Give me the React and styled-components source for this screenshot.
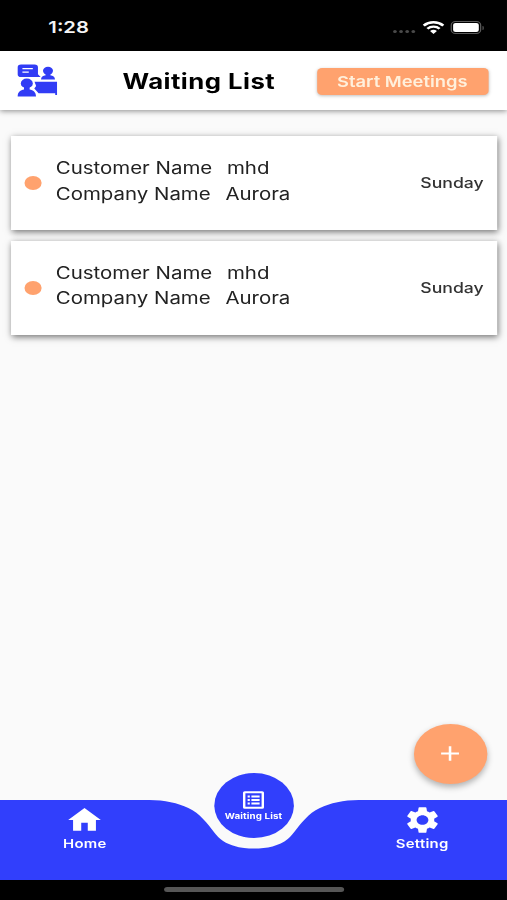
import styled, { createGlobalStyle } from 'styled-components';
import { MdHome, MdSettings, MdAdd } from 'react-icons/md';

const customers = [
  { id: 1, name: 'mhd', company: 'Aurora', day: 'Sunday' },
  { id: 2, name: 'mhd', company: 'Aurora', day: 'Sunday' },
];

const MeetingLogo = () => (
  <svg width="33" height="34" viewBox="0 0 33 34" fill="#313cf5">
    <path d="M3.200 .6h11a2.800 2.800 0 0 1 2.800 2.800v6.800l2.200 2.800H3.200A2.800 2.800 0 0 1 .4 10.200V3.400A2.800 2.800 0 0 1 3.200 .6z" />
    <path d="M4.300 4.700h8.500M4.300 8.200h5.200" stroke="#fff" strokeWidth="1.300" />
    <circle cx="25.200" cy="6.800" r="4.100" />
    <path d="M19.500 15.500c0-2.600 1.600-3.900 3.800-4.200v-2h3.800v2c2.200 .3 3.800 1.600 3.800 4.200z" />
    <circle cx="7.900" cy="19.400" r="4.900" />
    <path d="M.4 32.500c0-4.500 2.400-6.500 5.200-7v-3h4.600v3c2.800 .5 5.200 2.500 5.200 7z" />
    <path d="M14.200 17.700h18.400V31h-1.500v-1.700H17.500l-3.500-4.700 1.500-2.700z" />
  </svg>
);

const WifiIcon = () => (
  <svg width="18" height="13" viewBox="0 0 18 13" fill="none" stroke="#fff">
    <path d="M1 4.600a11.400 11.400 0 0 1 16 0" strokeWidth="2.400" />
    <path d="M4 7.700a7.100 7.100 0 0 1 10 0" strokeWidth="2.200" />
    <path d="M9 13 6.200 10.100a4 4 0 0 1 5.600 0z" fill="#fff" stroke="none" />
  </svg>
);

const ListIcon = () => (
  <svg width="18" height="18" viewBox="0 0 18 18" fill="none" stroke="#fff">
    <rect x="1.400" y="1.200" width="15.200" height="15.600" rx=".5" strokeWidth="2" />
    <path d="M4.200 5.400H6M4.200 9H6M4.200 12.600H6M7.300 5.400h6.700M7.300 9h6.700M7.300 12.600h6.700" strokeWidth="2" />
  </svg>
);

const App = () => {
  return (
    <>
      <GlobalStyle />
      <Screen>
        <StatusBar>
          <Clock>1:28</Clock>
          <StatusIcons>
            <Signal>
              <i />
              <i />
              <i />
              <i />
            </Signal>
            <WifiIcon />
            <Battery />
          </StatusIcons>
        </StatusBar>
        <Header>
          <MeetingLogo />
          <Title>Waiting List</Title>
          <StartButton>Start Meetings</StartButton>
        </Header>
        <List>
          {customers.map((c) => (
            <Card key={c.id}>
              <Dot />
              <Details>
                <Line>
                  <span>Customer Name</span>
                  <span>{c.name}</span>
                </Line>
                <Line>
                  <span>Company Name</span>
                  <span>{c.company}</span>
                </Line>
              </Details>
              <Day>{c.day}</Day>
            </Card>
          ))}
          <AddButton aria-label="Add">
            <MdAdd size={25} />
          </AddButton>
        </List>
        <Nav>
          <NavShape viewBox="0 0 414 80" preserveAspectRatio="none">
            <path
              d="M0 0H122C140 0 155 6.500 163 15.500C171 24.500 175 34 180 39C187 46 197 48.600 207.500 48.600C218 48.600 228 46 235 39C240 34 244 24.500 252 15.500C260 6.500 275 0 293 0H414V80H0Z"
              fill="#313ffc"
            />
          </NavShape>
          <NavItem>
            <MdHome size={32} />
            <NavLabel>Home</NavLabel>
          </NavItem>
          <ActiveItem>
            <ListIcon />
            <ActiveLabel>Waiting List</ActiveLabel>
          </ActiveItem>
          <NavItem>
            <MdSettings size={32} />
            <NavLabel>Setting</NavLabel>
          </NavItem>
        </Nav>
        <HomeBar>
          <HomeIndicator />
        </HomeBar>
      </Screen>
    </>
  );
};

const GlobalStyle = createGlobalStyle`
  * {
    box-sizing: border-box;
  }
  body {
    margin: 0;
    overflow: hidden;
    background: #fafafa;
    font-family: Inter, 'Liberation Sans', sans-serif;
  }
  svg {
    display: block;
    flex-shrink: 0;
  }
`;

/* 414pt wide phone layout, widened to fill the window */
const Screen = styled.div`
  width: 414px;
  height: 900px;
  display: flex;
  flex-direction: column;
  transform: scaleX(1.2246);
  transform-origin: left top;
  background: #fafafa;
  white-space: nowrap;
`;

const StatusBar = styled.div`
  height: 51px;
  padding: 3px 21px 0 39.500px;
  display: flex;
  align-items: center;
  justify-content: space-between;
  background: #000;
  color: #f4f4f4;
`;

const Clock = styled.div`
  font-size: 16.500px;
  font-weight: 600;
`;

const StatusIcons = styled.div`
  display: flex;
  align-items: center;
  gap: 5.500px;
`;

const Signal = styled.div`
  display: flex;
  gap: 2px;
  margin-top: 9px;

  i {
    width: 3px;
    height: 3px;
    border-radius: 50%;
    background: #4a4a4a;
  }
`;

const Battery = styled.div`
  width: 25px;
  height: 13px;
  padding: 1px;
  border: 1px solid #5c5c5c;
  border-radius: 4px;
  position: relative;

  &::before {
    content: '';
    display: block;
    height: 100%;
    border-radius: 2px;
    background: #fff;
  }
  &::after {
    content: '';
    position: absolute;
    right: -3px;
    top: 4px;
    width: 1.500px;
    height: 4px;
    border-radius: 0 2px 2px 0;
    background: #5c5c5c;
  }
`;

const Header = styled.header`
  height: 59px;
  padding: 0 15.500px 0 14px;
  display: flex;
  align-items: center;
  background: #fff;
  box-shadow: 0 1px 5px rgba(0, 0, 0, 0.45);
  z-index: 1;
`;

const Title = styled.h1`
  margin: 2px 0 0 53px;
  flex: 1;
  font-size: 21px;
  font-weight: 700;
  letter-spacing: 0.38px;
  line-height: 26px;
  color: #000;
`;

const StartButton = styled.button`
  width: 140px;
  height: 27px;
  margin-top: 1px;
  padding: 0;
  border: 0;
  border-radius: 4px;
  background: #ffa26e;
  box-shadow: 0 1px 3px rgba(0, 0, 0, 0.25);
  color: #fff0dc;
  font-family: inherit;
  font-size: 15px;
  font-weight: 600;
`;

const List = styled.main`
  flex: 1;
  padding: 26px 8px 0 9px;
  display: flex;
  flex-direction: column;
  gap: 10.500px;
  position: relative;
`;

const Card = styled.div`
  height: 94px;
  padding: 0 11px;
  display: flex;
  align-items: center;
  background: #fff;
  box-shadow: 1px 2px 6px rgba(0, 0, 0, 0.55);
`;

const Dot = styled.div`
  width: 14px;
  height: 14px;
  border-radius: 50%;
  background: #ffa26e;
`;

const Details = styled.div`
  flex: 1;
  margin: -3px 0 0 11.500px;
`;

const Line = styled.div`
  display: flex;
  gap: 12px;
  font-size: 16.700px;
  line-height: 25.500px;
  color: #222;
`;

const Day = styled.div`
  margin-top: -1px;
  font-size: 14.400px;
  font-weight: 500;
  color: #333;
`;

const AddButton = styled.button`
  position: absolute;
  right: 16.500px;
  bottom: 16.500px;
  width: 60px;
  height: 60px;
  padding: 0;
  display: flex;
  align-items: center;
  justify-content: center;
  border: 0;
  border-radius: 50%;
  background: #ffa26e;
  color: #fff;
  box-shadow: 0 3px 6px rgba(0, 0, 0, 0.3);
`;

const Nav = styled.nav`
  height: 80px;
  display: flex;
  justify-content: space-between;
  position: relative;
  color: #fff;
`;

const NavShape = styled.svg`
  position: absolute;
  inset: 0;
  width: 100%;
  height: 100%;
`;

const NavItem = styled.div`
  width: 138.500px;
  padding-top: 4px;
  display: flex;
  flex-direction: column;
  align-items: center;
  position: relative;
`;

const NavLabel = styled.span`
  font-size: 12.200px;
  font-weight: 600;
  letter-spacing: 0.2px;
  line-height: 15px;
`;

const ActiveItem = styled.div`
  width: 65px;
  height: 65px;
  margin-top: -27.500px;
  padding-top: 18.500px;
  display: flex;
  flex-direction: column;
  align-items: center;
  border-radius: 50%;
  background: #313ffc;
  position: relative;
`;

const ActiveLabel = styled.span`
  margin-top: 3px;
  font-size: 8px;
  font-weight: 700;
  letter-spacing: 0.1px;
  line-height: 9px;
`;

const HomeBar = styled.div`
  height: 20px;
  padding-top: 6.500px;
  display: flex;
  justify-content: center;
  background: #000;
`;

const HomeIndicator = styled.div`
  width: 147px;
  height: 5.500px;
  border-radius: 3px;
  background: #565656;
`;

export default App;
